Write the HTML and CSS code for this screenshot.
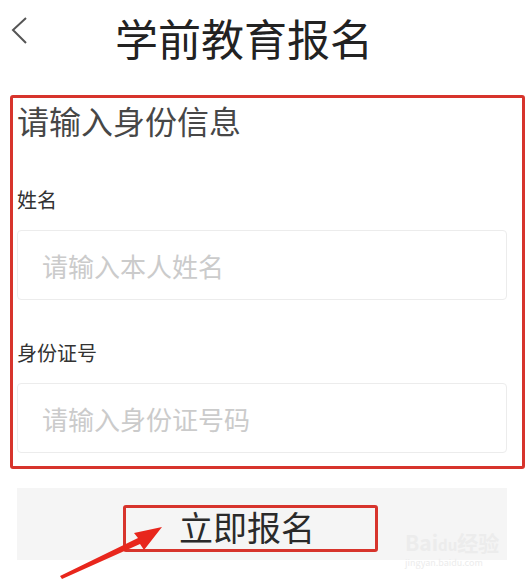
FILE: index.html
```html
<!DOCTYPE html>
<html lang="zh-CN">

<head>
  <meta charset="UTF-8">
  <meta name="viewport" content="width=device-width, initial-scale=1.0">
  <title>学前教育报名</title>
  <link rel="stylesheet" href="styles.css">
</head>

<body>
  <div class="page">
    <div class="header">
      <a class="back" href="#">
        <svg width="18" height="30" viewBox="0 0 18 30">
          <polyline points="15,2 2,14 15,27" fill="none" stroke="#555" stroke-width="2" />
        </svg>
      </a>
      <h1 class="title">学前教育报名</h1>
    </div>

    <div class="panel">
      <h2 class="heading">请输入身份信息</h2>
      <label class="label" for="name">姓名</label>
      <input class="field" id="name" type="text" placeholder="请输入本人姓名">
      <label class="label label-id" for="idcard">身份证号</label>
      <input class="field" id="idcard" type="text" placeholder="请输入身份证号码">
    </div>

    <button class="submit"><span class="mark">立即报名</span></button>

    <svg class="arrow" width="110" height="60" viewBox="0 0 110 60">
      <polygon points="2,56 80,18 76,13 104,7 86,30 82,24 4,59" fill="#e8261c" />
    </svg>

    <div class="watermark">
      <div class="wm-logo">Bai<span class="wm-du">du</span>经验</div>
      <div class="wm-url">jingyan.baidu.com</div>
    </div>
  </div>
</body>

</html>
```

FILE: styles.css
```css
* {
  margin: 0;
  padding: 0;
  box-sizing: border-box;
  font-family: "Noto Sans CJK SC", "Noto Sans", sans-serif;
}

body {
  background: #fff;
}

.page {
  position: relative;
  width: 530px;
  height: 585px;
  overflow: hidden;
}

.header {
  display: flex;
  align-items: flex-start;
  height: 95px;
  padding-top: 16px;
}

.back {
  display: block;
  margin-left: 11px;
  margin-top: 0;
}

.title {
  margin-left: 86px;
  font-size: 43px;
  line-height: 43px;
  font-weight: normal;
  color: #222;
}

.panel {
  width: 515px;
  margin-left: 10px;
  border: 3px solid #d7342c;
  border-radius: 3px;
  padding: 6px 15px 13px 4px;
}

.heading {
  font-size: 32px;
  line-height: 32px;
  font-weight: normal;
  color: #474747;
}

.label {
  display: block;
  margin-top: 54px;
  font-size: 20px;
  line-height: 20px;
  color: #333;
}

.label-id {
  margin-top: 43px;
}

.field {
  display: block;
  width: 490px;
  height: 70px;
  margin-top: 20px;
  padding: 0 24px;
  border: 1px solid #ececec;
  border-radius: 4px;
  font-size: 26px;
  line-height: 26px;
  color: #333;
  outline: none;
}

.field::placeholder {
  color: #cbcbcb;
}

.submit {
  display: flex;
  align-items: flex-start;
  width: 490px;
  height: 72px;
  margin: 19px 0 0 17px;
  padding: 17px 0 0 106px;
  border: 0;
  background: #f5f5f5;
}

.mark {
  display: block;
  width: 255px;
  height: 47px;
  border: 3px solid #d7342c;
  border-radius: 3px;
  padding-left: 53px;
  font-size: 34px;
  line-height: 38px;
  text-align: left;
  color: #2a2a2a;
}

.arrow {
  position: absolute;
  left: 58px;
  top: 520px;
}

.watermark {
  position: absolute;
  left: 405px;
  top: 530px;
  color: #ececec;
  font-family: "Liberation Sans", sans-serif;
}

.wm-logo {
  font-size: 21px;
  line-height: 24px;
  font-weight: bold;
}

.wm-du {
  font-size: 15px;
}

.wm-url {
  font-size: 9px;
  line-height: 12px;
}
```
